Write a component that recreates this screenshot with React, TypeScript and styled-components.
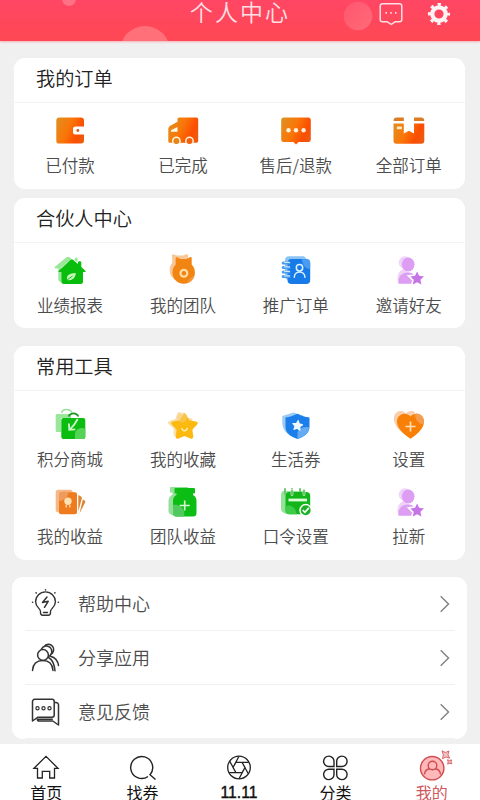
import React from "react";
import styled, { createGlobalStyle } from "styled-components";

const GlobalStyle = createGlobalStyle`
  * { box-sizing: border-box; }
  body {
    margin: 0;
    background: #f0f0f0;
    font-family: "Noto Sans CJK SC", sans-serif;
  }
`;

const Page = styled.div`
  width: 480px;
  height: 800px;
  overflow: hidden;
  display: flex;
  flex-direction: column;
  background: #f0f0f0;
`;

const Header = styled.header`
  position: relative;
  flex: none;
  height: 41px;
  display: grid;
  grid-template-columns: 1fr auto 1fr;
  background: linear-gradient(#ff4664, #ff4854);
  box-shadow: 0 1px 2px rgba(255, 90, 110, 0.45);
`;

const Bubbles = styled.svg`
  position: absolute;
  inset: 0;
`;

const HeaderTitle = styled.h1`
  position: relative;
  grid-column: 2;
  margin: 0;
  font-size: 23px;
  line-height: 22px;
  font-weight: 350;
  letter-spacing: 2.1px;
  color: #ffe0e5;
`;

const HeaderActions = styled.div`
  position: relative;
  display: flex;
  justify-content: flex-end;
  gap: 22px;
  padding: 1px 28px 0 0;
`;

const Content = styled.main`
  flex: none;
  height: 702.5px;
  padding: 16.5px 13px 0 13.5px;
  display: flex;
  flex-direction: column;
`;

const Card = styled.section<{ $height: number; $gap: number }>`
  flex: none;
  width: 451.7px;
  height: ${(p) => p.$height}px;
  margin-bottom: ${(p) => p.$gap}px;
  border-radius: 11px;
  background: #fff;
`;

const CardTitle = styled.h2`
  margin: 0;
  height: 45.5px;
  padding-left: 22.5px;
  border-bottom: 1px solid #f3f3f3;
  font-size: 19.2px;
  line-height: 40px;
  font-weight: 350;
  color: #222;
`;

const Grid = styled.div<{ $top: number }>`
  display: grid;
  grid-template-columns: repeat(4, 1fr);
  row-gap: 9px;
  padding-top: ${(p) => p.$top}px;
`;

const Item = styled.div<{ $lift?: number }>`
  height: 68px;
  display: flex;
  flex-direction: column;
  align-items: center;
  gap: ${(p) => 3 - (p.$lift ?? 0)}px;
`;

const ItemLabel = styled.span`
  font-size: 16.5px;
  line-height: 24px;
  font-weight: 350;
  color: #4c4c4c;
  white-space: nowrap;
`;

const Menu = styled.section`
  flex: none;
  width: 455px;
  height: 162px;
  margin-left: -1.5px;
  padding: 0 12px 0 13px;
  border-radius: 11px;
  background: #fff;
`;

const MenuRow = styled.div`
  height: 54px;
  display: flex;
  align-items: center;
  padding: 0 5px;
  border-bottom: 1px solid #f1f1f1;
`;

const MenuLabel = styled.span`
  flex: 1;
  margin: -2px 0 0 18px;
  font-size: 18px;
  line-height: 26px;
  font-weight: 350;
  color: #4c4c4c;
`;

const TabBar = styled.nav`
  flex: none;
  width: 482px;
  height: 56.5px;
  margin-left: -2px;
  display: grid;
  grid-template-columns: repeat(5, 1fr);
  background: #fff;
`;

const Tab = styled.div<{ $active?: boolean }>`
  display: flex;
  flex-direction: column;
  align-items: center;
  padding-top: 6.5px;
  color: ${(p) => (p.$active ? "#cf5860" : "#111")};
`;

const TabLabel = styled.span<{ $latin?: boolean }>`
  margin-top: -1.5px;
  font-family: ${(p) => (p.$latin ? '"Liberation Sans", ' : "")}"Noto Sans CJK SC", sans-serif;
  font-size: ${(p) => (p.$latin ? 15.7 : 16)}px;
  font-weight: 400;
  line-height: 15px;
  -webkit-text-stroke: ${(p) => (p.$latin ? "0.4px" : "0")};
`;

const Svg = ({ size = 40, children }: { size?: number; children: React.ReactNode }) => (
  <svg width={size} height={size} viewBox={`0 0 ${size} ${size}`} fill="none">
    {children}
  </svg>
);

const OrangeGradient = ({ id }: { id: string }) => (
  <defs>
    <linearGradient id={id} x1="5" y1="12" x2="35" y2="26" gradientUnits="userSpaceOnUse">
      <stop offset="0" stopColor="#e08f20" />
      <stop offset="0.45" stopColor="#fa7608" />
      <stop offset="0.8" stopColor="#fb4d02" />
      <stop offset="1" stopColor="#ee5a10" />
    </linearGradient>
  </defs>
);

const STAR =
  "M0 -10 L2.9 -4 L9.5 -3.1 L4.7 1.5 L5.9 8.1 L0 5 L-5.9 8.1 L-4.7 1.5 L-9.5 -3.1 L-2.9 -4 Z";

const WalletIcon = () => (
  <Svg>
    <OrangeGradient id="wallet" />
    <path d="M9.5 7.4H31a3 3 0 0 1 3 3v6.1H25.500a2.500 2.500 0 0 0-2.500 2.500v3a2.500 2.500 0 0 0 2.500 2.500H34v6.100a3 3 0 0 1-3 3H9.500a3.200 3.200 0 0 1-3.200-3.200V10.600a3.200 3.200 0 0 1 3.200-3.200Z" fill="url(#wallet)" />
    <circle cx="27.8" cy="20.5" r="1.4" fill="#cf5a25" />
  </Svg>
);

const TruckIcon = () => (
  <Svg>
    <OrangeGradient id="truck" />
    <path d="M16.3 7.5H33.4a1.8 1.8 0 0 1 1.8 1.8V31a1.8 1.8 0 0 1-1.8 1.8H6.8A1.5 1.5 0 0 1 5.3 31.300V19c0-1 .6-2.200 1.500-3l7.700-4.200V9.300c0-1 .8-1.800 1.800-1.800Z" fill="url(#truck)" />
    <path d="M14.500 16.900V21.700H8V20.300Z" fill="#fffbe8" />
    <circle cx="13.400" cy="31" r="3.700" fill="#e58418" stroke="#fff3d8" strokeWidth="1.500" />
    <circle cx="26.500" cy="31" r="3.700" fill="#f45e0c" stroke="#fff3d8" strokeWidth="1.500" />
    <path d="M5 35.200H35" stroke="#fff" strokeWidth="2" />
  </Svg>
);

const ChatIcon = () => (
  <Svg>
    <OrangeGradient id="chat" />
    <path d="M8 7.400H32a2.800 2.800 0 0 1 2.800 2.800V29.200a2.800 2.800 0 0 1-2.800 2.800H22.500L20 34.600L17.500 32H8a2.800 2.800 0 0 1-2.800-2.800V10.200A2.800 2.800 0 0 1 8 7.400Z" fill="url(#chat)" />
    <circle cx="12.500" cy="20.300" r="2.200" fill="#fff3df" />
    <circle cx="20" cy="20.300" r="2.200" fill="#fff3df" />
    <circle cx="27.600" cy="20.300" r="2.200" fill="#fff3df" />
  </Svg>
);

const BoxIcon = () => (
  <Svg>
    <OrangeGradient id="box" />
    <path d="M7.500 7.500H14.800V11H4.600A3.200 3.200 0 0 1 7.500 7.500ZM25 7.500H32.200A3.200 3.200 0 0 1 35.200 11H25Z" fill="#db7b22" />
    <path d="M4.500 13.400H14.800V23.600L20 20.800L25 23.600V13.400H35.300V30.700a3 3 0 0 1-3 3H7.500a3 3 0 0 1-3-3Z" fill="url(#box)" />
    <rect x="7.800" y="16.600" width="5.200" height="2.600" rx="0.800" fill="#ffe9c8" />
  </Svg>
);

const HouseIcon = () => (
  <Svg>
    <path d="M4.900 16.800L16.500 7.300c1-.8 2.200-.8 3.200 0l2 1.600L11 18v14.500a3.500 3.500 0 0 1-2.700-3.300V18.500H5.500c-.9 0-1.200-1-.6-1.700Z" fill="#9be79a" />
    <path d="M24.700 10.500V9a1.500 1.500 0 0 1 3 0v3Z" fill="#9be79a" />
    <path d="M20.700 9.700a1.700 1.700 0 0 1 2.300 0L28 14V12.200c0-1.100 3.300-1.100 3.300 0V17l4 3.800c.6.700.3 1.300-.5 1.300H33V31.500a2.500 2.500 0 0 1-2.500 2.500H14A2.700 2.700 0 0 1 11.300 31.300V22.100H9.400C8.500 22.100 8.200 21.400 8.800 20.800Z" fill="#08bd0c" />
    <path d="M17 30C16 24.500 20 23.500 25.800 23C25.500 28 22 31 17 30Z" fill="#c8f7bd" />
    <path d="M17 30L22.500 26" stroke="#08bd0c" strokeWidth="0.900" />
  </Svg>
);

const MedalIcon = () => (
  <Svg>
    <path d="M9 5.500c0-1 .8-1.400 1.600-1.100L14 5.500h6l3.500-1.200c1-.3 1.500.2 1.500 1.200V12L14 31A12 12 0 0 1 6.700 20c0-3 1-5.500 2.600-7.300Z" fill="#f8c795" />
    <path d="M12.700 8.500c0-1 .8-1.500 1.700-1.100L17.500 9h6L27 7.200c1-.4 1.700 0 1.700 1.100v6.300a11.200 11.200 0 1 1-16 0Z" fill="#f28411" />
    <path d="M24 33.500c1-4 4-6.500 7.700-8a11 11 0 0 1-7.700 8Z" fill="#f7a14a" opacity=".65" />
    <circle cx="20.900" cy="23.300" r="3.400" stroke="#ffdca3" strokeWidth="2.200" />
  </Svg>
);

const BookIcon = () => (
  <Svg>
    <path d="M13 6.200H28l3 3L13 30c-2.500 0-4-1.500-4-4V10a4 4 0 0 1 4-3.800Z" fill="#8cc3f5" />
    <rect x="11.500" y="9" width="22.700" height="25" rx="4" fill="#167be8" />
    <path d="M26 9h4.200a4 4 0 0 1 4 4v6c-5 0-8.200-4.500-8.200-10Z" fill="#57a5f2" opacity=".8" />
    <path d="M7.300 13H13M7.300 17.500H13M7.300 22H13M7.300 26.500H13" stroke="#489bed" strokeWidth="3.200" strokeLinecap="round" />
    <path d="M8.500 12.300H13.500M8.500 16.800H13.500M8.500 21.300H13.500M8.500 25.800H13.500" stroke="#c9e7ff" strokeWidth="1.300" strokeLinecap="round" />
    <circle cx="23.500" cy="17.800" r="3.200" stroke="#dff0ff" strokeWidth="1.500" />
    <path d="M18.300 27.200c0-7 10.600-7 10.600 0" stroke="#dff0ff" strokeWidth="1.500" strokeLinecap="round" />
  </Svg>
);

const PersonIcon = () => (
  <Svg>
    <circle cx="16" cy="12.500" r="6.300" fill="#f0d3fa" />
    <path d="M8.300 30c0-7 3-10.500 8-11.500l4 8-9 5.500Z" fill="#f0d3fa" />
    <ellipse cx="19.200" cy="14.500" rx="6.300" ry="6.900" fill="#dc9df2" />
    <path d="M10.700 33.800c-1 0-1.500-.6-1.500-1.500C9.500 26 12.500 23 19 22.200c3.300.3 6 1.500 8 4.300L23 33.800Z" fill="#dc9df2" />
    <path d={STAR} transform="translate(28.100 28.700) scale(.72)" fill="#c775e6" stroke="#fff" strokeWidth="4.500" paintOrder="stroke" />
  </Svg>
);

const BagIcon = () => (
  <Svg>
    <path d="M11.500 8c1-4.800 8.500-4.500 10.500-.5" stroke="#9ddb9e" strokeWidth="1.400" />
    <path d="M5.700 10.500c0-1 .7-1.500 1.500-1.500H21v4H11v14H7.200c-.9 0-1.500-.7-1.500-1.500Z" fill="#9ae79c" />
    <path d="M18.500 11.500c2-4.300 8-4.300 10 0" stroke="#1d9823" strokeWidth="1.700" />
    <rect x="11.300" y="13" width="24" height="21" rx="2" fill="#0bbd10" />
    <path d="M25 34V29c0-5 6.500-7.500 10.300-5v8a2 2 0 0 1-2 2Z" fill="#55d258" />
    <path d="M27.700 14C26 17.500 23.500 21 19.700 24.700M18.900 18.500l.4 6.400 6-.5" stroke="#c9f7c5" strokeWidth="1.800" />
  </Svg>
);

/* Plump five-pointed star with softened tips */
const SOFT_STAR =
  "M-1.800 -11.800Q0 -14.600 1.800 -11.800L4.800 -6.300L11.700 -5Q14.800 -4 12.700 -1.500L8 3.500L9 10.300Q9 13.400 6 12.500L0 9.800L-6 12.500Q-9 13.400 -9 10.300L-8 3.500L-12.700 -1.500Q-14.800 -4 -11.700 -5L-4.800 -6.300Z";

const FavouriteIcon = () => (
  <Svg>
    <path d={SOFT_STAR} transform="translate(17.500 19) rotate(-8) scale(.92)" fill="#f9dfaa" />
    <path d={SOFT_STAR} transform="translate(21.500 21.300) scale(.98)" fill="#fcb90f" />
    <circle cx="19" cy="12.500" r="5" fill="#f7cd78" opacity=".55" />
    <path d="M19 23.500c.5 3 4.500 3 5.200 0" stroke="#fff0b0" strokeWidth="1.400" strokeLinecap="round" />
  </Svg>
);

const ShieldIcon = () => (
  <Svg>
    <path d="M6.300 11L17.500 7.500 28 11 14 30.500C8 27 6.300 22 6.300 17Z" fill="#9bcaf4" />
    <path d="M9.500 12.500C14 12 17 10.700 21.500 8.700c4 2.200 7.500 3.200 12 3.800v9c0 6.500-5 10.300-12 12.500-7-2.200-12-6-12-12.500Z" fill="#1b7eea" />
    <path d="M21.500 34V27c2-4 7-6 11.700-4.500-.8 6-5.200 9.500-11.700 11.500Z" fill="#64abf4" />
    <path d={STAR} transform="translate(21.500 20.700) rotate(8) scale(.52)" fill="#eff9ff" stroke="#eff9ff" strokeWidth="2" strokeLinejoin="round" />
  </Svg>
);

const HeartIcon = () => (
  <Svg>
    <path d="M17 30C1 20 3 7 11 6c3.500-.3 5 1.500 6 2.500C19 6 23 5 26 7.500Z" fill="#f9ceaa" />
    <path d="M21.500 33.700C12 27.500 8 22 8 16.500 8 9 17 6 21.500 11.500 26 6 35 9 35 16.500 35 22 31 27.500 21.500 33.700Z" fill="#f88007" />
    <path d="M26 9c5-2 10 3 8.800 10-4.500 1-8.800-4-8.800-10Z" fill="#f4a25c" opacity=".85" />
    <path d="M21.500 16.500V26.500M16.500 21.500H26.500" stroke="#ffe0b5" strokeWidth="1.700" />
  </Svg>
);

const CardsIcon = () => (
  <Svg>
    <rect x="5.700" y="7.700" width="17" height="22.500" rx="2.500" fill="#f6b889" />
    <path d="M10.500 10.300h14.500a2 2 0 0 1 2 2V30.300a2 2 0 0 1-2 2H11a2 2 0 0 1-2-2v-18.500Z" fill="#ee7b1d" />
    <path d="M9 11.500c1-2 5-2.500 9-1.700 1 5-4 9-9 9.200Z" fill="#ef9b5c" />
    <circle cx="18" cy="19.200" r="3.700" fill="#ffe0b3" />
    <path d="M16.200 23v2.600M19.800 23v2.600" stroke="#ffd2a0" strokeWidth="1.400" />
    <path d="M28.300 13l2.700 1.500c.8.500 1 1 .8 2L28.300 29.500ZM32.800 17.500l1.800 1c.7.500.8 1 .5 2L29.500 31.500Z" fill="#df852f" />
  </Svg>
);

const JarIcon = () => (
  <Svg>
    <path d="M7 6a1 1 0 0 1 1-1h17v5L14 33c-5 1-8.500-1-8.500-4V19c0-3 1.500-5 4-6.500V10.500H7Z" fill="#94df99" />
    <rect x="11.500" y="6" width="20.500" height="5.500" rx="1.200" fill="#0cbe13" />
    <path d="M13.500 11H30v2c2.400 1.200 3.500 3.200 3.500 6V31a3.500 3.500 0 0 1-3.500 3.500H13.300A3.500 3.500 0 0 1 10 31V19c0-2.800 1-4.800 3.500-6Z" fill="#0cbe13" />
    <path d="M10 23c6-1 11 3 11.300 8v3.500h-8A3.500 3.500 0 0 1 10 31Z" fill="#52c95c" />
    <path d="M21.700 18.500V28.500M16.700 23.500H26.700" stroke="#d6fbd4" strokeWidth="1.600" />
  </Svg>
);

const CalendarIcon = () => (
  <Svg>
    <path d="M8 9H28l-16 23c-4-.5-7-2-7-5V13c0-2.500 1-4 3-4Z" fill="#96e29b" />
    <path d="M9 7v5M16 7v5M24 7v5" stroke="#70c875" strokeWidth="2" strokeLinecap="round" />
    <rect x="9.500" y="10" width="24.700" height="22.300" rx="4" fill="#12b51a" />
    <path d="M9.500 24c5-2 10 1 11.300 8.300h-7.300a4 4 0 0 1-4-4Z" fill="#3ecc48" />
    <path d="M16 8.500v4M28 8.500v4" stroke="#b9efb9" strokeWidth="2.800" strokeLinecap="round" />
    <path d="M16 8.500v4M28 8.500v4" stroke="#3ca646" strokeWidth="1.200" strokeLinecap="round" />
    <path d="M12.500 18H31" stroke="#dcffd8" strokeWidth="2.800" />
    <circle cx="29.700" cy="28.200" r="5.700" fill="#1bb125" stroke="#fff" strokeWidth="1.500" />
    <path d="M26.700 28l2.200 2.300 4-4.400" stroke="#effff0" strokeWidth="1.800" />
  </Svg>
);

const BulbIcon = () => (
  <svg width="30" height="30" viewBox="0 0 30 30" fill="none" stroke="#333" strokeWidth="1.400" strokeLinecap="round" strokeLinejoin="round">
    <path d="M10.500 22.300C10.300 19.500 5.600 18 5.600 12.800a9.900 9.900 0 0 1 19.800 0c0 5.200-4.700 6.700-4.900 9.500v1.500c0 1.700-1.100 2.400-2.200 2.400h-5.600c-1.100 0-2.200-.7-2.200-2.400ZM13.500 23.500h4" />
    <path d="M17 8l-4.500 5.500 5.700-1.200-3.700 6" strokeWidth="1.500" />
    <path d="M2.500 13.300h.2M28.200 13.300h.2M6 3.700l.2.200M25 3.700l-.2.200M15.500.8v.1" strokeWidth="1.500" />
  </svg>
);

const PeopleIcon = () => (
  <svg width="30" height="30" viewBox="0 0 30 30" fill="none" stroke="#333" strokeWidth="1.500" strokeLinecap="round">
    <path d="M20.500 11.500A5.300 5.300 0 1 0 14 3.700M18 13.700A5.500 5.500 0 1 0 11.300 6.300M20.500 13.200c4.500 1.200 7.300 4.300 8 9.300M18.500 14.500c3.700 2 5.800 6 6.500 13.300" />
    <circle cx="13" cy="12" r="5.400" fill="#fff" />
    <path d="M2.500 27.500C3 21 6 17.600 12.800 17.600S22.500 21 23 27.500" />
  </svg>
);

const FeedbackIcon = () => (
  <svg width="30" height="30" viewBox="0 0 30 30" fill="none" stroke="#333" strokeWidth="1.500" strokeLinejoin="round">
    <path d="M4.700 2.300H22a2.200 2.200 0 0 1 2.200 2.200V18a2.200 2.200 0 0 1-2.200 2.200H8L2.500 24V4.500a2.200 2.200 0 0 1 2.200-2.200Z" />
    <path d="M24.500 5.500H26a2.500 2.500 0 0 1 2.500 2.500V28l-5.800-4H9.500c-1.300 0-2.200-.7-2.200-1.800h15.500" />
    <circle cx="7.500" cy="11.300" r="1.600" strokeWidth="1.200" />
    <circle cx="13.500" cy="11.300" r="1.600" strokeWidth="1.200" />
    <circle cx="19.500" cy="11.300" r="1.600" strokeWidth="1.200" />
  </svg>
);

const Chevron = () => (
  <svg width="10" height="20" viewBox="0 0 10 20" fill="none">
    <path d="M0.700 2.200L8.500 10L0.700 17.800" stroke="#858585" strokeWidth="1.500" />
  </svg>
);

const MessageIcon = () => (
  <svg width="26" height="28" viewBox="0 0 26 28" fill="none" stroke="#ffdfe4" strokeWidth="1.500" strokeLinejoin="round">
    <path d="M4.500 2.700h17a2.300 2.300 0 0 1 2.300 2.300v13.500a2.300 2.300 0 0 1-2.300 2.300h-4.500L13.200 23.500l-3.800-2.700H4.500a2.300 2.300 0 0 1-2.300-2.300V5a2.300 2.300 0 0 1 2.300-2.300Z" />
    <path d="M7.400 11.900h1.600M12.200 11.900h1.600M17 11.900h1.600" strokeWidth="1.800" />
  </svg>
);

const GearIcon = () => (
  <svg width="26" height="26" viewBox="0 0 26 26" fill="none" stroke="#fff4f5">
    <circle cx="13" cy="13" r="6.700" strokeWidth="4.200" />
    <circle cx="13" cy="13" r="9.500" strokeWidth="3.200" strokeDasharray="3.200 4.261" strokeDashoffset="1.600" />
  </svg>
);

const HomeTabIcon = () => (
  <Svg size={36}>
    <path d="M6 18.300L18 6.300L30 18.300H26.500V28H21.700V21.300H14.300V28H9.500V18.300Z" stroke="#222" strokeWidth="1.300" />
  </Svg>
);

const SearchTabIcon = () => (
  <Svg size={36}>
    <path d="M23 26.500A11 11 0 1 1 25 24.700L30.500 29.500" stroke="#222" strokeWidth="1.400" />
  </Svg>
);

const ApertureTabIcon = () => (
  <Svg size={36}>
    <g stroke="#222" strokeWidth="1.300">
      <circle cx="18" cy="17.500" r="11.300" />
      <path d="M15 12.300h6l3 5.200-3 5.200h-6l-3-5.200ZM15 12.300h12.800M21 12.300l6.300 11.500M24 17.500l-6 11.200M21 22.700H8.200M15 22.700L8.700 11.200M12 17.500l6-11.200" />
    </g>
  </Svg>
);

const CloverTabIcon = () => (
  <Svg size={36}>
    <path d="M17 16.500V11.500a5.200 5.200 0 1 0-5.200 5ZM19.700 16.500V11.500a5.200 5.200 0 1 1 5.200 5ZM17 19.200v5a5.200 5.200 0 1 1-5.200-5ZM19.700 19.200v5a5.200 5.200 0 1 0 5.200-5Z" stroke="#222" strokeWidth="1.400" />
  </Svg>
);

const ProfileTabIcon = () => (
  <svg width="46" height="36" viewBox="0 0 46 36" fill="none" stroke="#d04c50" strokeWidth="1.400">
    <circle cx="23.200" cy="18.200" r="11.700" fill="#ffb9bb" />
    <circle cx="23.500" cy="15.500" r="4.300" />
    <path d="M15.500 24.500c.3-3.500 2.500-5.500 5.500-5.700M31.500 24.500c-.3-3.500-2.500-5.500-5.500-5.700" />
    <path d="M33 .8l3.300 1.700L40 1l-1 3.700 1.700 3.500-3.700-1.200-3.500 1.700.8-3.700ZM38.500 9.700l2 .8 2.200-.6-.7 2 .8 2-2-.6-2.200.8.6-2Z" strokeWidth="0.800" fill="#f3c0c0" />
  </svg>
);

type Entry = { label: string; Icon: () => React.ReactElement };

const orders: Entry[] = [
  { label: "已付款", Icon: WalletIcon },
  { label: "已完成", Icon: TruckIcon },
  { label: "售后/退款", Icon: ChatIcon },
  { label: "全部订单", Icon: BoxIcon },
];

const partner: Entry[] = [
  { label: "业绩报表", Icon: HouseIcon },
  { label: "我的团队", Icon: MedalIcon },
  { label: "推广订单", Icon: BookIcon },
  { label: "邀请好友", Icon: PersonIcon },
];

const tools: Entry[] = [
  { label: "积分商城", Icon: BagIcon },
  { label: "我的收藏", Icon: FavouriteIcon },
  { label: "生活券", Icon: ShieldIcon },
  { label: "设置", Icon: HeartIcon },
  { label: "我的收益", Icon: CardsIcon },
  { label: "团队收益", Icon: JarIcon },
  { label: "口令设置", Icon: CalendarIcon },
  { label: "拉新", Icon: PersonIcon },
];

const menu: Entry[] = [
  { label: "帮助中心", Icon: BulbIcon },
  { label: "分享应用", Icon: PeopleIcon },
  { label: "意见反馈", Icon: FeedbackIcon },
];

const tabs: (Entry & { latin?: boolean; active?: boolean })[] = [
  { label: "首页", Icon: HomeTabIcon },
  { label: "找券", Icon: SearchTabIcon },
  { label: "11.11", Icon: ApertureTabIcon, latin: true },
  { label: "分类", Icon: CloverTabIcon },
  { label: "我的", Icon: ProfileTabIcon, active: true },
];

type PanelProps = { title: string; items: Entry[]; height: number; gap: number; top: number; lift?: number };

const Panel = ({ title, items, height, gap, top, lift }: PanelProps) => (
  <Card $height={height} $gap={gap}>
    <CardTitle>{title}</CardTitle>
    <Grid $top={top}>
      {items.map(({ label, Icon }) => (
        <Item key={label} $lift={lift}>
          <Icon />
          <ItemLabel>{label}</ItemLabel>
        </Item>
      ))}
    </Grid>
  </Card>
);

export default function App() {
  return (
    <Page>
      <GlobalStyle />
      <Header>
        <Bubbles width="480" height="41" viewBox="0 0 480 41">
          <defs>
            <linearGradient id="bubble" x1="0" y1="0" x2="1" y2="1">
              <stop offset="0" stopColor="#ff8390" stopOpacity="0.250" />
              <stop offset="1" stopColor="#ff8390" stopOpacity="0.600" />
            </linearGradient>
          </defs>
          <circle cx="69" cy="-1" r="7" fill="#ff7186" />
          <circle cx="145" cy="51" r="25" fill="#ff7079" />
          <circle cx="358" cy="16" r="14.300" fill="url(#bubble)" />
        </Bubbles>
        <HeaderTitle>个人中心</HeaderTitle>
        <HeaderActions>
          <MessageIcon />
          <GearIcon />
        </HeaderActions>
      </Header>
      <Content>
        <Panel title="我的订单" items={orders} height={131} gap={9} top={7} />
        <Panel title="合伙人中心" items={partner} height={130} gap={18} top={7} />
        <Panel title="常用工具" items={tools} height={214} gap={17.5} top={14} lift={1} />
        <Menu>
          {menu.map(({ label, Icon }) => (
            <MenuRow key={label}>
              <Icon />
              <MenuLabel>{label}</MenuLabel>
              <Chevron />
            </MenuRow>
          ))}
        </Menu>
      </Content>
      <TabBar>
        {tabs.map(({ label, Icon, latin, active }) => (
          <Tab key={label} $active={active}>
            <Icon />
            <TabLabel $latin={latin}>{label}</TabLabel>
          </Tab>
        ))}
      </TabBar>
    </Page>
  );
}
